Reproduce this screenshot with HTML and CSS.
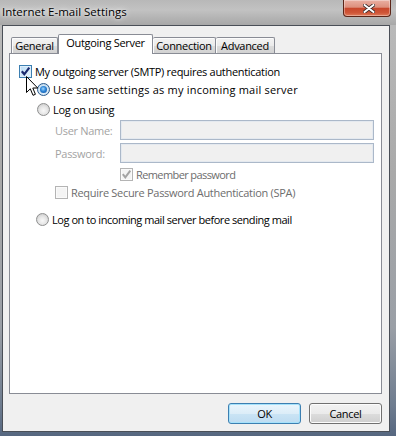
FILE: index.html
```html
<!DOCTYPE html>
<html>
<head>
<meta charset="utf-8">
<link rel="stylesheet" href="styles.css">
</head>
<body>
<div class="window">
  <div class="titlebar">
    <span class="title">Internet E-mail Settings</span>
    <div class="close">
      <svg width="12" height="9" viewBox="0 0 12 9"><path d="M1.5 1 L10.5 8 M10.5 1 L1.5 8" stroke="#3a2b2b" stroke-width="3.6" stroke-linecap="round"/><path d="M1.5 1 L10.5 8 M10.5 1 L1.5 8" stroke="#ffffff" stroke-width="2" stroke-linecap="round"/></svg>
    </div>
  </div>
  <div class="frame">
    <div class="client">
      <div class="tabs">
        <div class="tab w-general">General</div>
        <div class="tab sel w-out">Outgoing Server</div>
        <div class="tab w-conn">Connection</div>
        <div class="tab w-adv">Advanced</div>
      </div>
      <div class="panel">
        <div class="row r1">
          <span class="cb hot"><svg width="11" height="11" viewBox="0 0 11 11"><path d="M1.8 5.2 L4.3 8.3 L9.3 1.6" fill="none" stroke="#1b2a6e" stroke-width="2.2"/></svg></span>
          <span class="lbl">My outgoing server (SMTP) requires authentication</span>
        </div>
        <div class="row r2">
          <span class="radio on"></span>
          <span class="lbl rl wide">Use same settings as my incoming mail server</span>
        </div>
        <div class="row r3">
          <span class="radio"></span>
          <span class="lbl rl">Log on using</span>
        </div>
        <div class="row field">
          <span class="flabel">User Name:</span>
          <span class="input"></span>
        </div>
        <div class="row field pw">
          <span class="flabel">Password:</span>
          <span class="input"></span>
        </div>
        <div class="row rem">
          <span class="cb dis"><svg width="11" height="11" viewBox="0 0 11 11"><path d="M1.8 5.2 L4.3 8.3 L9.3 1.6" fill="none" stroke="#a4a4a4" stroke-width="2"/></svg></span>
          <span class="lbl dlbl tight2">Remember password</span>
        </div>
        <div class="row spa">
          <span class="cb dis"></span>
          <span class="lbl dlbl">Require Secure Password Authentication (SPA)</span>
        </div>
        <div class="row last">
          <span class="radio"></span>
          <span class="lbl rl tight">Log on to incoming mail server before sending mail</span>
        </div>
      </div>
      <div class="buttons">
        <div class="btn default">OK</div>
        <div class="btn">Cancel</div>
      </div>
    </div>
  </div>
</div>
<svg class="cursor" width="13" height="21" viewBox="0 0 13 21"><path d="M0.5 0.5 L0.5 16.5 L4.3 12.8 L7 19.3 L9.4 18.3 L6.8 12 L11.7 12 Z" fill="#ffffff" stroke="#000000" stroke-width="1" stroke-linejoin="miter"/></svg>
</body>
</html>
```

FILE: styles.css
```css
html, body {
  margin: 0;
  padding: 0;
}
body {
  position: relative;
  width: 396px;
  height: 436px;
  overflow: hidden;
  font-family: "Open Sans", "Noto Sans", sans-serif;
  font-size: 11px;
  letter-spacing: -0.3px;
  color: #000;
}
.window {
  width: 396px;
  height: 436px;
  display: flex;
  flex-direction: column;
  background: linear-gradient(180deg, #bcbcbc 0%, #a9a9a9 40%, #9a9fa6 75%, #6e7c8f 93%, #566780 100%);
}
.titlebar {
  height: 25px;
  flex: none;
  display: flex;
  align-items: flex-start;
  justify-content: space-between;
  background: linear-gradient(180deg, #b8b8b8 0%, #c2c2c2 40%, #b2b2b2 75%, #a8a8a8 100%);
}
.title {
  padding-left: 2px;
  margin-top: 4px;
  font-size: 11.5px;
  letter-spacing: 0;
  line-height: 15px;
  text-shadow: 0 0 6px rgba(255,255,255,0.9), 0 0 3px rgba(255,255,255,0.7);
}
.close {
  width: 48px;
  height: 17px;
  margin-right: 5px;
  box-sizing: border-box;
  border: 1px solid #5b2518;
  border-top: none;
  border-radius: 0 0 4px 4px;
  background: linear-gradient(180deg, #eab0a3 0%, #dd8f7d 45%, #c8472c 52%, #cf5638 80%, #e07d5c 100%);
  box-shadow: inset 0 0 0 1px rgba(255,255,255,0.35);
  display: flex;
  align-items: center;
  justify-content: center;
  padding-left: 3px;
}
.frame {
  flex: 1;
  display: flex;
  padding: 0 6px 4px 2px;
}
.client {
  flex: 1;
  box-sizing: border-box;
  border: 1px solid #4a4f57;
  background: #f0f0f0;
  display: flex;
  flex-direction: column;
  padding: 0 7px 0 6px;
}
.tabs {
  display: flex;
  align-items: flex-end;
  height: 19px;
  margin-top: 8px;
  padding-left: 2px;
}
.tab {
  box-sizing: border-box;
  height: 16px;
  border: 1px solid #898c95;
  border-bottom: none;
  border-radius: 2px 2px 0 0;
  text-align: center;
  line-height: 15px;
  background: linear-gradient(180deg, #f3f3f3 0%, #ebebeb 50%, #dddddd 51%, #d2d2d2 100%);
  box-shadow: inset 1px 1px 0 #fcfcfc;
  white-space: nowrap;
}
.tab + .tab {
  border-left: none;
}
.tab.sel {
  position: relative;
  z-index: 1;
  height: 20px;
  margin-bottom: -1px;
  background: #ffffff;
  box-shadow: none;
  border-left: 1px solid #898c95;
}
.tab.sel + .tab {
  border-left: none;
}
.w-general { width: 47px; }
.w-out { width: 95px; }
.w-conn { width: 63px; }
.w-adv { width: 59px; }
.panel {
  height: 341px;
  box-sizing: border-box;
  border: 1px solid #898c95;
  background: #ffffff;
  padding: 8px 7px 0 9px;
  display: flex;
  flex-direction: column;
}
.row {
  display: flex;
  align-items: center;
  height: 18px;
  flex: none;
}
.lbl {
  margin-left: 3px;
  line-height: 15px;
  white-space: nowrap;
}
.rl { margin-left: 3px; }
.wide { letter-spacing: 0.22px; }
.tight { letter-spacing: -0.45px; }
.tight2 { letter-spacing: -0.6px; }
.r2 { height: 19px; padding-left: 18px; }
.r3 { height: 20px; padding-left: 18px; }
.field {
  height: 20px;
  margin-top: 1px;
  padding-left: 36px;
}
.field.pw { margin-top: 3px; }
.flabel {
  width: 65px;
  flex: none;
  color: #a3a3a3;
  line-height: 15px;
}
.input {
  flex: 1;
  height: 20px;
  box-sizing: border-box;
  border: 1px solid #abb8c9;
  background: #f0f0f0;
  box-shadow: inset 0 0 0 1px #e4e9ef;
}
.rem { margin-top: 2px; padding-left: 101px; }
.spa { padding-left: 36px; }
.last { margin-top: 9px; padding-left: 17px; }
.dlbl { color: #6d6d6d; }
.cb {
  width: 13px;
  height: 13px;
  flex: none;
  box-sizing: border-box;
  border: 1px solid #8f8f8f;
  background: linear-gradient(135deg, #e2e2e2 0%, #f6f6f6 100%);
  box-shadow: inset 0 0 0 1px #f4f4f4;
  display: flex;
  align-items: center;
  justify-content: center;
}
.cb.hot {
  border-color: #3c7fb1;
  background: linear-gradient(135deg, #b9dcf6 0%, #e8f4fc 100%);
  box-shadow: inset 0 0 0 1px #deeefb;
}
.cb.dis {
  border-color: #b4b4b4;
  background: #f4f4f4;
  box-shadow: inset 0 0 0 1px #fafafa;
}
.radio {
  width: 13px;
  height: 13px;
  flex: none;
  box-sizing: border-box;
  border-radius: 50%;
  border: 1px solid #8e8f8f;
  background: radial-gradient(circle at 50% 60%, #f8f8f8 0%, #e6e6e6 45%, #cfcfcf 80%, #b8b8b8 100%);
  position: relative;
}
.radio.on {
  border-color: #2b5a8c;
  background: radial-gradient(circle at 50% 60%, #eaf5fd 0%, #cfe3f3 60%, #a9c7e2 100%);
}
.radio.on::after {
  content: "";
  position: absolute;
  left: 2px;
  top: 2px;
  width: 7px;
  height: 7px;
  border-radius: 50%;
  background: radial-gradient(circle at 45% 40%, #9fd6ff 0%, #2c84d6 45%, #0d4a9a 100%);
}
.buttons {
  display: flex;
  justify-content: flex-end;
  gap: 8px;
  margin-top: 9px;
}
.btn {
  width: 73px;
  height: 21px;
  box-sizing: border-box;
  border: 1px solid #707070;
  border-radius: 3px;
  background: linear-gradient(180deg, #f2f2f2 0%, #ebebeb 50%, #dddddd 51%, #cfcfcf 100%);
  box-shadow: inset 0 0 0 1px #fcfcfc;
  display: flex;
  align-items: center;
  justify-content: center;
  line-height: 15px;
}
.btn.default {
  border-color: #3c7fb1;
  background: linear-gradient(180deg, #eaf6fd 0%, #dcedf8 50%, #cae4f5 51%, #bedcf1 100%);
  box-shadow: inset 0 0 0 1px #a6e2fb;
}
.cursor {
  position: absolute;
  left: 26px;
  top: 76px;
}
```
